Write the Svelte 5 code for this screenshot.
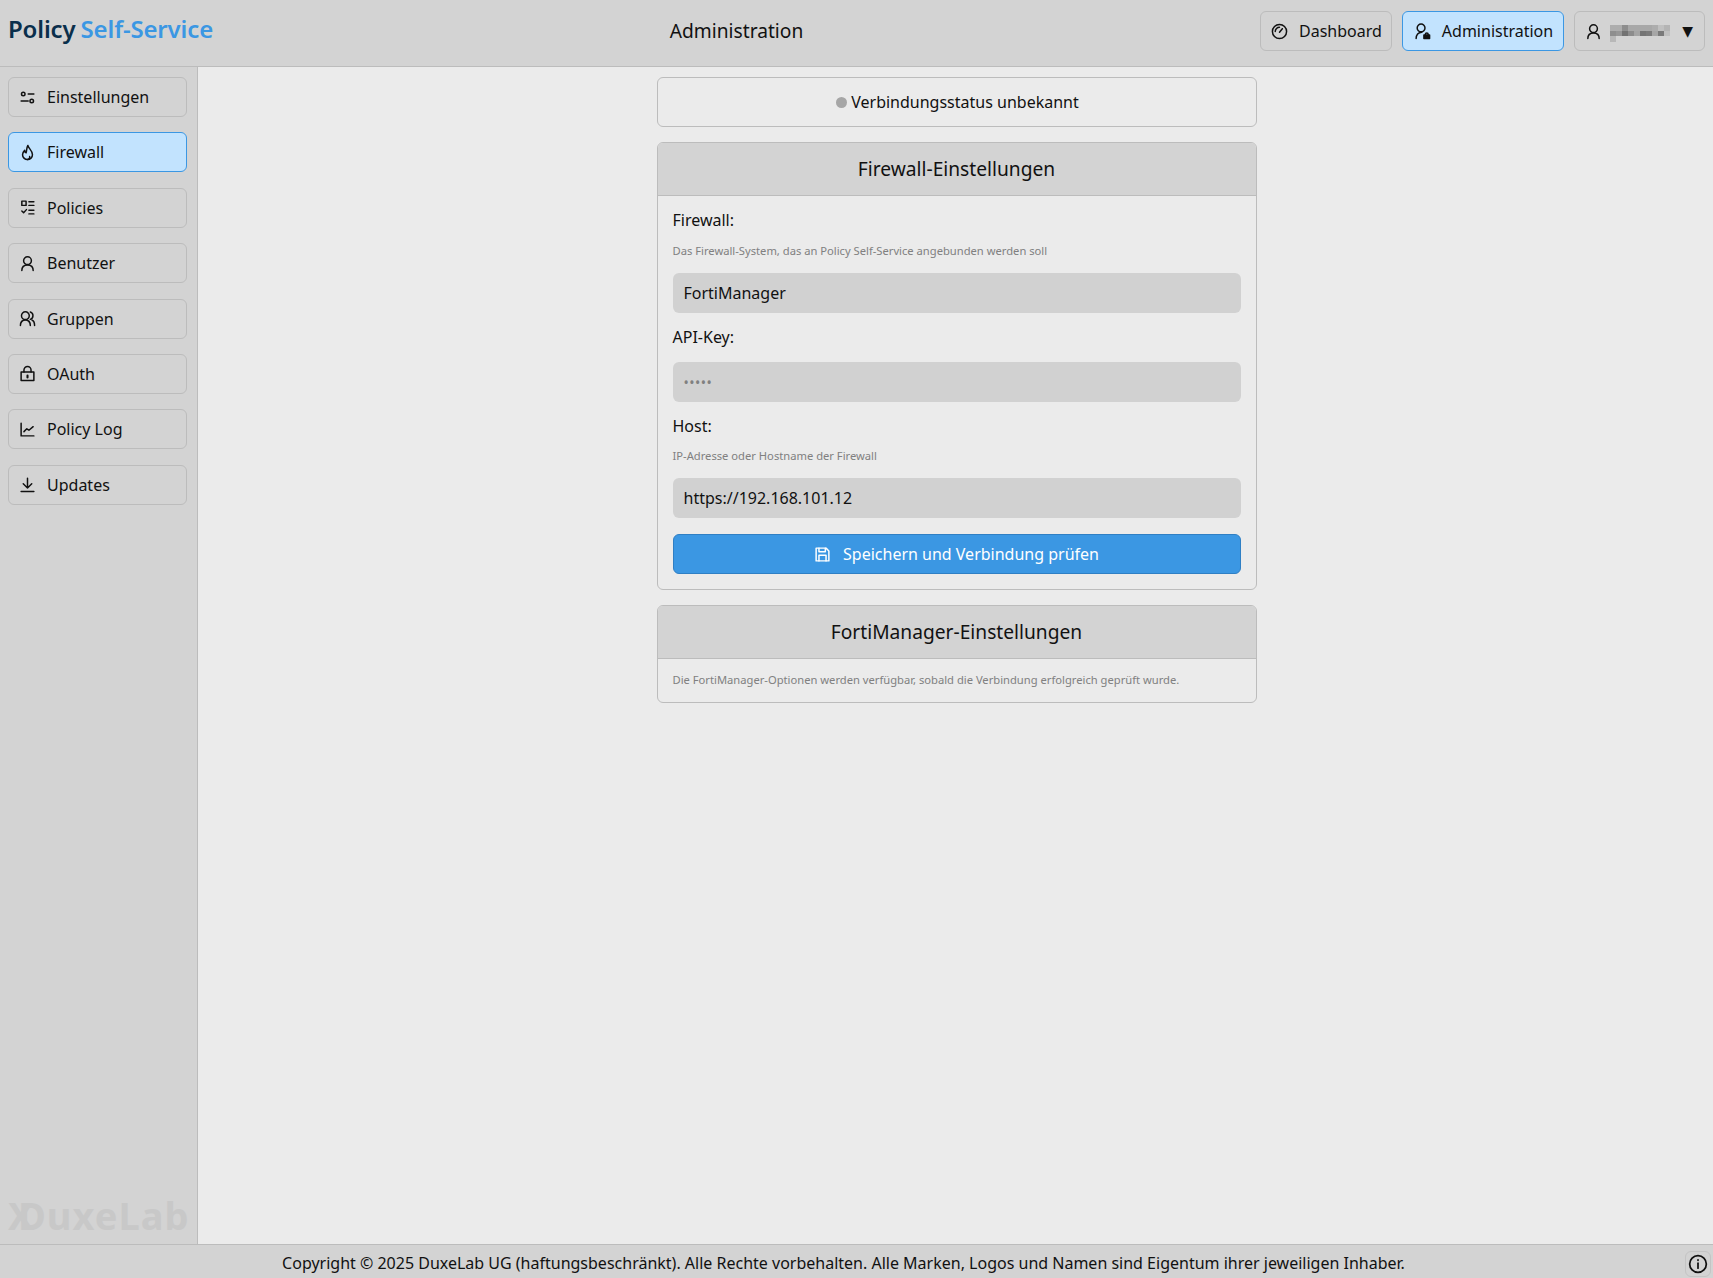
<script>
  const nav = [
    ['Einstellungen', 'sliders'],
    ['Firewall', 'flame'],
    ['Policies', 'list'],
    ['Benutzer', 'user'],
    ['Gruppen', 'users'],
    ['OAuth', 'lock'],
    ['Policy Log', 'chart'],
    ['Updates', 'download']
  ];
  const pixels = [
    ['#adadad', '#adadad', '#8e8e8e', '#a8a8a8', '#a8a8a8', '#a8a8a8', '#a8a8a8', '#adadad', '#c0c0c0', '#b4b4b4'],
    ['#8e8e8e', '#969696', '#727272', '#8c8c8c', '#a4a4a4', '#747474', '#7a7a7a', '#a6a6a6', '#7a7a7a', '#c0c0c0'],
    ['#b8b8b8']
  ];
</script>

{#snippet icon(name)}
  <svg class="icon" viewBox="0 0 24 24" fill="none" stroke="currentColor" stroke-width="2.100" stroke-linecap="round" stroke-linejoin="round" aria-hidden="true">
    {#if name === 'sliders'}
      <circle cx="6" cy="7" r="2.500" /><path d="M13 7h8M3 17h10" /><circle cx="18" cy="17" r="2.500" />
    {:else if name === 'flame'}
      <path d="M12.500 2c.5 4 6.500 7 6.500 13a7 7 0 0 1-14 0c0-2.500 1-4 3-6 0 2 .8 3 2 3.500 1-3 .5-7 2.500-10.500z" /><path d="M12 22a3.500 3.500 0 0 0 3-4.500" />
    {:else if name === 'list'}
      <rect x="4" y="3" width="6" height="6" /><path d="M14 4h7M14 9h7M14 16h7M14 21h7M4 17l2.500 2.500L10.500 15" />
    {:else if name === 'user'}
      <circle cx="12" cy="8" r="5.500" /><path d="M4 22c0-5 3-8 8-8s8 3 8 8" />
    {:else if name === 'users'}
      <circle cx="9" cy="8" r="5.500" /><path d="M2 22c0-5 3-8 7-8s7 3 7 8M16 2.800a5.500 5.500 0 0 1 0 10.400M18.500 14.500c2.500 1 3.500 4 3.500 7.500" />
    {:else if name === 'lock'}
      <rect x="3" y="10" width="18" height="12" /><path d="M7 10V7a5 5 0 0 1 10 0v3" /><path d="M12 15v2.500" stroke-width="3" />
    {:else if name === 'chart'}
      <path d="M3 3v18h18" /><path d="M7 15l4-4 3 2 6-5" />
    {:else if name === 'download'}
      <path d="M12 3v14M6 11l6 6 6-6M3 22h18" />
    {:else if name === 'gauge'}
      <circle cx="12" cy="12" r="10" /><path d="M12 13l4-5M6 12a6 6 0 0 1 6-6" />
    {:else if name === 'useradmin'}
      <circle cx="10" cy="7" r="5.500" /><path d="M3 22c0-5 3-9 8-9" /><rect x="14" y="17" width="8" height="5" fill="currentColor" /><path d="M16 17v-1a2 2 0 0 1 4 0v1" />
    {:else if name === 'save'}
      <path d="M3 3h14l4 4v14H3z" /><path d="M7 3v5h9V3M7 21v-8h10v8" />
    {:else if name === 'info'}
      <circle cx="12" cy="12" r="10" /><path d="M12 11v6" /><path d="M12 7v.5" />
    {/if}
  </svg>
{/snippet}

<div class="page">
  <header class="topbar">
    <div class="logo"><span class="dark">Policy</span> <span class="blue">Self-Service</span></div>
    <div class="title">Administration</div>
    <div class="topnav">
      <button class="btn dash">{@render icon('gauge')}Dashboard</button>
      <button class="btn admin active">{@render icon('useradmin')}Administration</button>
      <button class="btn usermenu">
        {@render icon('user')}
        <svg class="pix" viewBox="0 0 10 3" preserveAspectRatio="none" shape-rendering="crispEdges" aria-hidden="true">
          {#each pixels as row, y}
            {#each row as fill, x}
              <rect {x} {y} width="1" height="1" {fill} />
            {/each}
          {/each}
        </svg>
        <span class="caret">▼</span>
      </button>
    </div>
  </header>

  <div class="middle">
    <aside class="sidebar">
      <nav class="sidenav">
        {#each nav as item, i}
          <button class="btn side" class:active={i === 1}>{@render icon(item[1])}{item[0]}</button>
        {/each}
      </nav>
      <div class="watermark"><span class="wx">X</span>DuxeLab</div>
    </aside>

    <main class="content">
      <div class="column">
        <div class="status"><span class="dot"></span>Verbindungsstatus unbekannt</div>

        <section class="card">
          <h2>Firewall-Einstellungen</h2>
          <div class="body">
            <div class="label">Firewall:</div>
            <div class="hint">Das Firewall-System, das an Policy Self-Service angebunden werden soll</div>
            <div class="field">FortiManager</div>
            <div class="label spaced">API-Key:</div>
            <div class="field muted">•••••</div>
            <div class="label">Host:</div>
            <div class="hint tight">IP-Adresse oder Hostname der Firewall</div>
            <div class="field">https://192.168.101.12</div>
            <button class="save">{@render icon('save')}Speichern und Verbindung prüfen</button>
          </div>
        </section>

        <section class="card">
          <h2>FortiManager-Einstellungen</h2>
          <div class="body note">Die FortiManager-Optionen werden verfügbar, sobald die Verbindung erfolgreich geprüft wurde.</div>
        </section>
      </div>
    </main>
  </div>

  <footer class="footer">
    <div class="copy">Copyright © 2025 DuxeLab UG (haftungsbeschränkt). Alle Rechte vorbehalten. Alle Marken, Logos und Namen sind Eigentum ihrer jeweiligen Inhaber.</div>
    <button class="infobtn">{@render icon('info')}</button>
  </footer>
</div>

<style>
  :global(body) {
    margin: 0;
    font-family: "Noto Sans", sans-serif;
    font-size: 16px;
    color: #111;
    background: #ebebeb;
  }
  button { font: inherit; color: inherit; }
  .page { height: 1278px; display: flex; flex-direction: column; }
  .topbar {
    height: 62px;
    flex: none;
    display: flex;
    align-items: center;
    justify-content: space-between;
    padding: 0 8px 4px;
    background: #d3d3d3;
    border-bottom: 1px solid #bcbcbc;
  }
  .logo { font-size: 24px; font-weight: 600; letter-spacing: -0.15px; word-spacing: -1px; margin-bottom: 5px; white-space: nowrap; }
  .dark { color: #0a2f4b; }
  .blue { color: #3b97e3; }
  .title { font-size: 19.200px; margin-bottom: 2px; }
  .topnav { display: flex; gap: 10px; }
  .btn {
    display: flex;
    align-items: center;
    gap: 11px;
    height: 40px;
    box-sizing: border-box;
    padding: 0 10px;
    background: #d3d3d3;
    border: 1px solid #bcbcbc;
    border-radius: 6px;
    white-space: nowrap;
  }
  .btn.active { background: #c2e3fe; border-color: #3b97e3; }
  .dash { padding-right: 9px; }
  .admin { padding-left: 11px; }
  .usermenu { padding-right: 11px; }
  .icon { width: 17px; height: 17px; flex: none; }
  .pix { width: 60px; height: 17px; margin-top: 5px; margin-left: -3px; }
  .caret { font-size: 14px; font-family: "DejaVu Sans", sans-serif; margin-left: 1px; }
  .middle { flex: 1; display: flex; min-height: 0; }
  .sidebar {
    flex: none;
    background: #d3d3d3;
    border-right: 1px solid #bcbcbc;
    padding: 10px 10px 0 8px;
    width: 179px;
    display: flex;
    flex-direction: column;
    justify-content: space-between;
  }
  .sidenav { display: flex; flex-direction: column; gap: 15.400px; }
  .side { width: 100%; }
  .watermark {
    position: relative;
    font-weight: 700;
    font-size: 38px;
    letter-spacing: 1px;
    color: #c8c8c8;
    line-height: 40px;
    white-space: nowrap;
    padding-left: 10px;
    margin-bottom: 9px;
  }
  .wx { position: absolute; left: 0; top: 0; }
  .content { flex: 1; display: flex; justify-content: center; padding: 10px 0 0 2px; }
  .column { width: 600px; display: flex; flex-direction: column; gap: 15px; }
  .status {
    height: 50px;
    box-sizing: border-box;
    flex: none;
    display: flex;
    align-items: center;
    justify-content: center;
    gap: 4px;
    padding-left: 2px;
    border: 1px solid #bcbcbc;
    border-radius: 6px;
  }
  .dot { width: 11px; height: 11px; border-radius: 50%; background: #a6a6a6; }
  .card { border: 1px solid #bcbcbc; border-radius: 6px; overflow: hidden; }
  h2 {
    margin: 0;
    height: 53px;
    box-sizing: border-box;
    display: flex;
    align-items: center;
    justify-content: center;
    padding-bottom: 2px;
    font-size: 19.200px;
    font-weight: 400;
    background: #d3d3d3;
    border-bottom: 1px solid #bcbcbc;
  }
  .body { padding: 13px 15px 15px; display: flex; flex-direction: column; }
  .label { line-height: 22px; margin-bottom: 7px; }
  .label.spaced { margin-bottom: 14px; }
  .hint { font-size: 11.200px; color: #808080; line-height: 15px; margin: 5px 0 15px; }
  .hint.tight { margin-top: 4px; }
  .field {
    height: 40px;
    box-sizing: border-box;
    display: flex;
    align-items: center;
    padding: 0 11px;
    background: #d1d1d1;
    border-radius: 6px;
    margin-bottom: 13px;
  }
  .muted { color: #808080; font-size: 14px; letter-spacing: 0.5px; }
  .save {
    height: 40px;
    display: flex;
    align-items: center;
    justify-content: center;
    gap: 12px;
    background: #3b97e3;
    color: #fff;
    border: 1px solid #2f7fc4;
    border-radius: 6px;
    margin-top: 3px;
  }
  .note { font-size: 11.200px; color: #808080; padding: 13px 15px 15px; }
  .footer {
    height: 33px;
    flex: none;
    display: flex;
    align-items: center;
    background: #d3d3d3;
    border-top: 1px solid #bcbcbc;
  }
  .copy { flex: 1; text-align: center; padding: 2px 0 0 2px; }
  .infobtn {
    width: 26px;
    height: 26px;
    padding: 0;
    display: flex;
    align-items: center;
    justify-content: center;
    background: #d3d3d3;
    border: 1px solid #c4c4c4;
    border-radius: 6px;
    margin: 5px 2px 0 0;
  }
  .infobtn .icon { width: 20px; height: 20px; }
</style>
